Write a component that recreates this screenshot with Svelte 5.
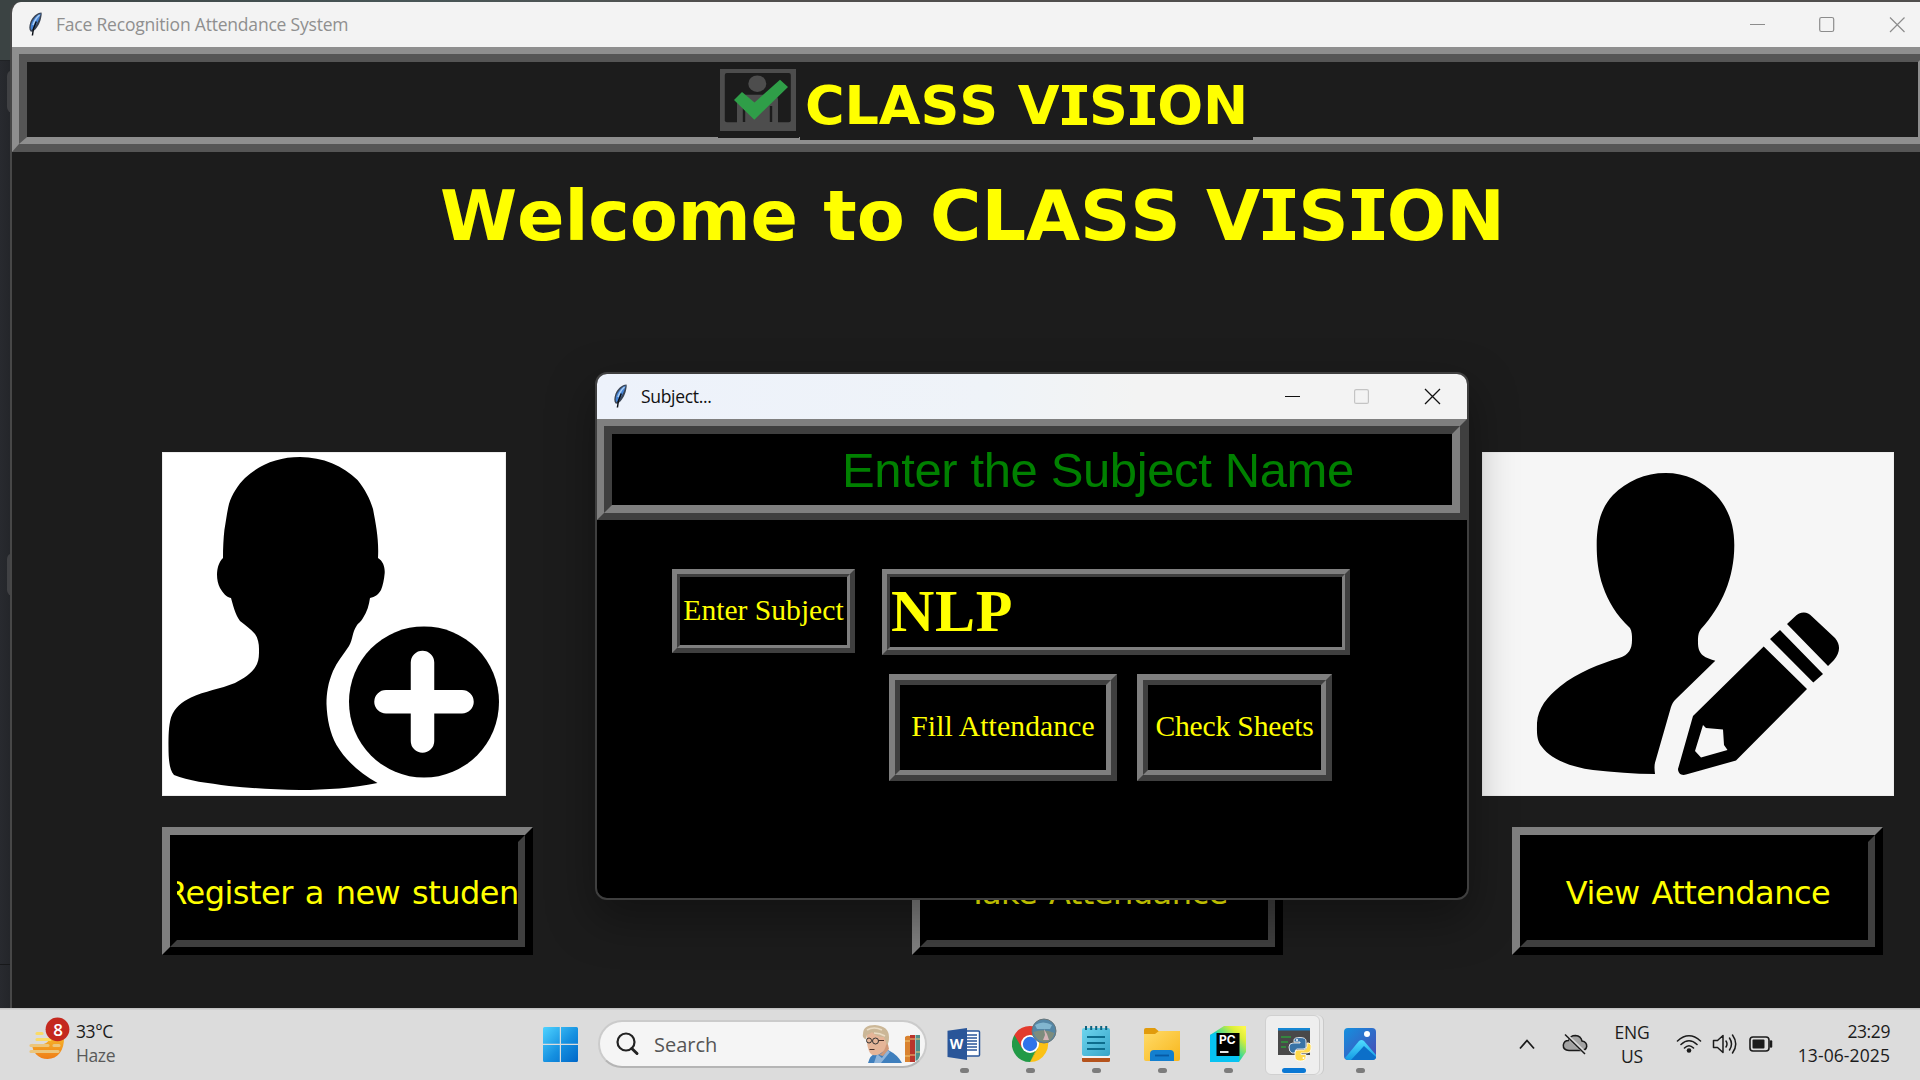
<script>
  const letters = (s) => s.split('');
  let subject = $state('NLP');
</script>

{#snippet feather()}
  <svg class="feather" viewBox="0 0 15 24">
    <path d="M13.5 0.6C9 .6 4.5 5 2.4 10C1 14 .8 17.5 2.6 19.6L4.6 19.8C9 17 12 11 13 6.500C13.600 4 14 2 13.500 .6Z" fill="#3a4454" />
    <path d="M12.800 1.600C9 3 5 7 3.400 11.500C2.600 14 2.400 16.500 3.200 18.200C7 15.500 11 9.500 12.800 1.600Z" fill="#4684d6" />
    <path d="M11.500 3C9 5 6.500 9 5 13" stroke="#a9cdf3" stroke-width="1.600" fill="none" />
    <path d="M8.300 9.500C6.500 13 4.600 17 4.400 23.500" stroke="#0b0f16" stroke-width="1.500" fill="none" />
  </svg>
{/snippet}

{#snippet banner(text)}{#each letters(text) as ch}{#if ch === 'I'}<span class="serif-i">I</span>{:else}{ch}{/if}{/each}{/snippet}

<div class="desktop">
  <div class="behind">
    <div class="behind-top"></div>
    <div class="behind-rest"></div>
    <i class="tab t1"></i><i class="tab t2"></i><i class="seam"></i>
  </div>

  <section class="main-window">
    <header class="titlebar">
      {@render feather()}
      <span class="title inactive">Face Recognition Attendance System</span>
      <svg class="ctl main-ctl" viewBox="0 0 160 20">
        <path d="M0 10.500H15" stroke="#8c8c8c" />
        <rect x="69.700" y="3.500" width="14" height="14" rx="1.800" fill="none" stroke="#8c8c8c" stroke-width="1.200" />
        <path d="M140 3.500L154.500 18M154.500 3.500L140 18" stroke="#8c8c8c" stroke-width="1.200" />
      </svg>
    </header>

    <div class="ridge head"><div class="ridge-in">
      <div class="logo-box">
        <svg width="76" height="62" viewBox="0 0 76 62">
          <rect width="76" height="62" fill="#4d4d4d" />
          <rect x="4.800" y="4" width="66" height="49.300" rx="2" fill="#1c1c1c" />
          <ellipse cx="37.300" cy="14.700" rx="9" ry="8.300" fill="#4d4d4d" />
          <path d="M17 54V31Q17 25.700 23 25.700H52Q58 25.700 58 31V54Z" fill="#4d4d4d" />
          <path d="M24 37V53M51 37V53" stroke="#1c1c1c" stroke-width="2.400" />
          <path d="M22 23L34.500 33.500L60 10.700L68 18L34.300 50.700L14 31Z" fill="#2f9e48" />
        </svg>
      </div>
      <div class="brand">{@render banner('CLASS VISION')}</div>
    </div></div>

    <h1>{@render banner('Welcome to CLASS VISION')}</h1>

    <div class="pictures">
      <svg class="pic one" viewBox="0 0 344 344" preserveAspectRatio="none">
        <path d="M138 5C161 5 181 14 195.500 28C203 37 208 47 211 57C214 73 217 88 216 106C221 109 223 115 222.700 121C222 128 221 133 219 138C216 143 213 145 208 146C207 153 205 160 201 166C199 170 196 171 194.500 174C190 181 191 187 187 194C181 203 175 210 171 219C166 231 164.500 241 164.500 252C165 267 168 281 174.500 293C184 309 199 322 215.500 331C190 336 165 338 138 338C112 338 90 336 67 334C46 331 26 329 12 323C7 318 6.500 305 6.500 295C6.500 284 6.500 275 9 265.500C13 255 20 250 29 245.500C43 239 58 237 73 231C82 226 91 221 95 212C97 207 97 203 97 197C97 192 96 186 93 182C89 177 83 173 78 169C73 162 71 153 69 146C64 145 61 141 58 136C56 132 55 128 55 122.600C55 116 57 110 61 106C61 96 61.500 86 62.400 78C64 69 65 60 67 52C70 42 76 33 83 26C98 12 117 5 138 5Z" />
        <ellipse cx="262" cy="250" rx="75" ry="75.600" />
        <path d="M260.500 210.500V289M224 249.700H300" stroke="#fff" stroke-width="23.500" stroke-linecap="round" />
      </svg>
      <svg class="pic two" viewBox="0 0 412 344" preserveAspectRatio="none">
        <path d="M183.700 21C203 21 221 29 234 43C247 57 252.300 74 252.300 93C252.300 126 240 154 219 177C216 181 216 185 216 190C216 196 217 200 221 203.500C224 206 229 207.500 233.300 208.700L194 247C191 250 190 252 189 255L173.500 309C172 313 172.500 318 173 322C152 322 131 320 111 318C87 315 68 306 60 295C54 288 55 279 55 271C56 256 65 245 78 234.500C96 220 118 212 137 206C147 203 150 197 150 188C150 183 150 180 148 176C134 163 126 149 121 134.600C116 120 114.700 107 114.700 93.300C114.700 74 118 57 131 43C145 29 163 21 183.700 21Z" />
        <path d="M305 172L312.500 165C318 159.500 325 159 330 164.500L353 186C359 193 358 201 352 208L346 214ZM298 178L341 222L331.300 230.500L288 187ZM281.700 194.500L325 237L254 308.500L204 322.600C199 324 196 321 196 317L211 264Z" />
        <path d="M221 273L224 276L241 277.500L242 293L245.500 298L219 305.500L213 299Z" fill="#f6f6f6" />
      </svg>
    </div>

    <div class="actions">
      {#each [['Register a new student', 'a'], ['Take Attendance', 'b'], ['View Attendance', 'c']] as [label, k]}
        <button class="raised {k}"><span class="raised-in"><span class="lbl">{label}</span></span></button>
      {/each}
    </div>
  </section>

  <section class="dialog">
    <header class="titlebar active">
      {@render feather()}
      <span class="title">Subject...</span>
      <svg class="ctl dlg-ctl" viewBox="0 0 160 20">
        <path d="M0 10.500H15" stroke="#111" />
        <rect x="69.600" y="3.600" width="13.800" height="13.800" rx="1.500" fill="none" stroke="#c4c4c4" stroke-width="1.200" />
        <path d="M140 3L155 18M155 3L140 18" stroke="#111" stroke-width="1.300" />
      </svg>
    </header>
    <div class="ridge dark dlg-head"><div class="ridge-in"><span>Enter the Subject Name</span></div></div>
    <div class="form">
      <div class="row">
        <div class="ridge dark thin tag"><div class="ridge-in">Enter Subject</div></div>
        <div class="ridge dark thin entry"><div class="ridge-in">{subject}</div></div>
      </div>
      <div class="row second">
        <div class="ridge dark mid fill"><div class="ridge-in">Fill Attendance</div></div>
        <div class="ridge dark mid check"><div class="ridge-in">Check Sheets</div></div>
      </div>
    </div>
  </section>

  <footer class="taskbar">
    <div class="weather">
      <svg width="44" height="46" viewBox="0 0 44 46">
        <defs><linearGradient id="sun" x1="0" y1="0" x2="0" y2="1"><stop offset="0" stop-color="#f6b62a" /><stop offset="1" stop-color="#ef7d17" /></linearGradient></defs>
        <path d="M4 27C4 37 11 43 19.500 43C30 43 36.500 34 36 21H22Q20 31 4 29Z" fill="url(#sun)" />
        <g stroke="#f4d272" stroke-width="3.200" stroke-linecap="round"><path d="M9 17.500H14M9 23.500H22" stroke="#fadb68" /><path d="M3 29.500H20M26 29.500H31M3 35.500H30" stroke="#ecc67c" /></g>
        <circle cx="29.500" cy="13.300" r="11.900" fill="#c4281e" />
      </svg>
      <b class="badge">8</b>
      <div class="temp"><span>33°C</span><span class="dim">Haze</span></div>
    </div>

    <svg class="start" viewBox="0 0 35 35">
      <defs><linearGradient id="win" x1="0" y1="0" x2="1" y2="1"><stop offset="0" stop-color="#4fd3ff" /><stop offset=".55" stop-color="#1590e0" /><stop offset="1" stop-color="#0067c8" /></linearGradient></defs>
      <path d="M1.500 0H16.800V16.800H0V1.500Q0 0 1.500 0ZM18 0H33.500Q35 0 35 1.500V16.800H18ZM0 18H16.800V35H1.500Q0 35 0 33.500ZM18 18H35V33.500Q35 35 33.500 35H18Z" fill="url(#win)" />
    </svg>

    <div class="search">
      <svg width="24" height="24" viewBox="0 0 24 24"><circle cx="10" cy="10" r="8.500" fill="none" stroke="#222" stroke-width="2.200" /><path d="M15.800 16.500L21 21.500" stroke="#222" stroke-width="3" stroke-linecap="round" /></svg>
      <span>Search</span>
      <svg class="art" width="60" height="40" viewBox="0 0 60 40">
        <path d="M6 38Q8 30 14 28L26 25Q36 30 40 38Z" fill="#3f7fbd" />
        <path d="M12 38L15 29L20 33L25 25L28 27L19 38Z" fill="#8fb4da" />
        <path d="M5 10Q6 3 15 3Q27 4 25 17Q24 26 17 29.500Q9 32 7 26Q4 18 5 10Z" fill="#e5b598" />
        <path d="M17 30Q24 26 25 15L27 24L21 31Z" fill="#cf9878" />
        <path d="M1 9Q1 0 13 0Q27 1 27 12Q27 18 25 20L22 12Q14 12 10 7Q7 10 5 10Q4 15 3 14Q0 12 1 9Z" fill="#cbb797" />
        <path d="M5 5Q12 1 20 5M12 8Q18 8 23 11" stroke="#eadcc5" stroke-width="1.600" fill="none" />
        <circle cx="7" cy="15.500" r="2.500" fill="none" stroke="#333" /><circle cx="13.500" cy="16" r="3" fill="none" stroke="#333" /><path d="M16.500 15.500H22M7.500 24.500H12.500" stroke="#4b332c" />
        <path d="M43 12Q45 10 48 11V37H43Z" fill="#d9822f" /><path d="M48 10H53V37H48Z" fill="#b9342b" /><path d="M53.500 10H58V30Q57 35 53.500 36Z" fill="#4e8f8b" />
        <path d="M43 16H48M43 31H48M48 14H53M48 30H53M54 14H58M54 27H58" stroke="#efcb79" />
      </svg>
    </div>

    <div class="apps">
      <div class="app">
        <svg viewBox="0 0 36 36"><rect x="19" y="5" width="14.500" height="25" rx="1" fill="#fff" stroke="#2a5699" stroke-width="1.500" /><path d="M21 9H31M21 12H31M21 15H31M21 18H31M21 21H31M21 24H31" stroke="#2a5699" stroke-width="1.300" /><path d="M1.500 4.800L21 2V34L1.500 31Z" fill="#2a5699" /></svg>
        <em class="w">W</em><i></i>
      </div>
      <div class="app">
        <svg class="wide" viewBox="0 0 46 46">
          <g transform="translate(18 28)">
            <path d="M0 0L15.600 -9A18 18 0 0 1 0 18Z" fill="#fbc116" />
            <path d="M0 0L0 18A18 18 0 0 1 -15.600 -9Z" fill="#229a47" />
            <path d="M-15.600 -9A18 18 0 0 1 15.600 -9H0L-7.800 4.500Z" fill="#e33b2e" />
            <path d="M0 18L7.800 4.500L0 0L-5 6Z" fill="#229a47" />
            <path d="M0 18L7.800 4.500L15.600 -9H0L6 6Z" fill="#fbc116" />
            <circle r="9" fill="#fff" /><circle r="7.200" fill="#2f73ea" />
          </g>
          <circle cx="32" cy="15" r="12" fill="#5486a5" stroke="#69777b" /><path d="M21.500 16Q32 12 42.500 17Q40 26 32 26Q24 25 21.500 16Z" fill="#7d8c7d" /><path d="M23 9Q31 4 40 9L38 13H25Z" fill="#82b6cf" /><path d="M32 13L35 18L37 24H31L33 19Z" fill="#d5b5b8" /></svg><i></i>
      </div>
      <div class="app">
        <svg viewBox="0 0 36 36"><defs><linearGradient id="np" x1="0" y1="0" x2="1" y2="1"><stop offset="0" stop-color="#6dd5ee" /><stop offset="1" stop-color="#38a5c8" /></linearGradient></defs><rect x="4" y="28" width="28" height="8" rx="1.500" fill="#b5531c" /><rect x="4" y="27" width="28" height="5" fill="#f3f3f3" /><rect x="4" y="2" width="28" height="28" rx="2" fill="url(#np)" /><path d="M8 0V4M13.200 0V4M18.200 0V4M23.200 0V4M28.200 0V4" stroke="#10627d" stroke-width="2" /><path d="M9 11H27M9 17H27M9 23H27" stroke="#0d6d8d" stroke-width="2" /></svg><i></i>
      </div>
      <div class="app">
        <svg viewBox="0 0 36 36"><defs><linearGradient id="fo" x1="0" y1="0" x2="1" y2="1"><stop offset="0" stop-color="#ffdb68" /><stop offset="1" stop-color="#f8b61c" /></linearGradient></defs><path d="M0 4Q0 2 2 2H11L15 5.500V12H0Z" fill="#e19b0c" /><path d="M0 8H11L15 5H36V33Q36 35 34 35H2Q0 35 0 33Z" fill="url(#fo)" /><path d="M6 35V28Q6 24 10 24H26Q30 24 30 28V35Z" fill="#137fcf" /><path d="M11 29.500H25" stroke="#0759a3" stroke-width="1.800" /></svg><i></i>
      </div>
      <div class="app">
        <svg viewBox="0 0 36 36"><defs><linearGradient id="pc" x1=".2" y1=".7" x2=".9" y2="0"><stop offset="0" stop-color="#07c3f2" /><stop offset=".3" stop-color="#20d5a6" /><stop offset=".75" stop-color="#d9ee37" /><stop offset="1" stop-color="#fcf84a" /></linearGradient></defs><path d="M14 0H36V26L29 36H0V9Z" fill="url(#pc)" /><path d="M0 9L7 6V29H29V36H0Z" fill="#07c3f2" /><rect x="6.500" y="7" width="23" height="23" /><path d="M10 26H18.500" stroke="#fff" stroke-width="1.800" /></svg>
        <em class="pc">PC</em><i></i>
      </div>
      <div class="app current">
        <svg viewBox="0 0 36 36"><rect x="2" y="2" width="32" height="27" fill="#494949" /><rect x="2" y="2" width="32" height="2.500" fill="#1686d2" /><path d="M5 11H15M5 16H12M5 21H10" stroke="#2f9b3c" stroke-width="1.300" /><path d="M24 11.500Q30 11.500 30 15V21Q30 23 27 23H21Q19 23 19 27H16Q13 26 13 21Q13 17 17 17H24V16H18V14Q18 11.500 24 11.500Z" fill="#3a73a6" stroke="#fff" stroke-width=".8" /><path d="M31 17H33Q36 18 35 23Q35 27 31 27H25V28.500H30V31Q30 35 24.500 35Q19 35 19 31V27Q19 24 22 24H28Q31 23 31 20Z" fill="#ffd94c" stroke="#fff" stroke-width=".8" /><circle cx="21" cy="14" r="1" fill="#fff" /><circle cx="27.500" cy="32" r="1" fill="#fff" /></svg><i></i>
      </div>
      <div class="app">
        <svg viewBox="0 0 36 36"><defs><linearGradient id="ph" x1="0" y1="0" x2="1" y2="1"><stop offset="0" stop-color="#1490df" /><stop offset="1" stop-color="#4b49b4" /></linearGradient><linearGradient id="ph2" x1="0" y1="0" x2="0" y2="1"><stop offset="0" stop-color="#4fdcff" /><stop offset="1" stop-color="#149be4" /></linearGradient></defs><rect x="2" y="2" width="32" height="32" rx="4" fill="url(#ph)" /><path d="M3 32L17 15Q19.500 13 22 15L34 29Q34 34 30 34H6Q4 34 3 32Z" fill="url(#ph2)" /><path d="M9 34L22 20L34 31Q34 34 30 34Z" fill="#0c6fc9" /><circle cx="25" cy="8" r="3" fill="#fff" /></svg><i></i>
      </div>
    </div>

    <div class="tray">
      <svg class="chev" viewBox="0 0 16 12"><path d="M1 10.500L8 2.500L15 10.500" fill="none" stroke="#1b1b1b" stroke-width="1.800" /></svg>
      <svg class="cloud" viewBox="0 0 26 22"><path d="M7 17.500Q1 17 1.300 12Q2 7.500 6.500 7.500Q8 2.500 13.500 2.500Q19 3 20 8Q25 9 24.700 13.500Q24 17.500 19 17.500Z" fill="#a3a3a3" stroke="#1b1b1b" stroke-width="1.500" /><path d="M3.500 1L23.500 20.500" stroke="#dcdcdc" stroke-width="3.200" /><path d="M3 1.500L23 21" stroke="#1b1b1b" stroke-width="1.500" /></svg>
      <div class="lang"><span>ENG</span><span>US</span></div>
      <svg class="wifi" viewBox="0 0 26 20"><g fill="none" stroke="#1b1b1b" stroke-width="1.600" stroke-linecap="round"><path d="M1.500 7Q13 -3.500 24.500 7M5 10.500Q13 3 21 10.500M8.500 14Q13 9.500 17.500 14" /></g><circle cx="13" cy="16.500" r="2.300" fill="#1b1b1b" /></svg>
      <svg class="spk" viewBox="0 0 26 22"><g fill="none" stroke="#1b1b1b" stroke-width="1.500" stroke-linecap="round" stroke-linejoin="round"><path d="M1.500 7.500H5.500L11 2.500V19.500L5.500 14.500H1.500Z" /><path d="M14 8Q16 11 14 14M17.500 5Q21.500 11 17.500 17M20.500 2Q27 11 20.500 20" /></g></svg>
      <svg class="bat" viewBox="0 0 24 18"><rect x="1" y="2" width="19" height="14" rx="3" fill="none" stroke="#1b1b1b" stroke-width="1.600" /><rect x="3.500" y="4.500" width="12" height="9" rx="1" fill="#1b1b1b" /><path d="M22 6.500V11.500" stroke="#1b1b1b" stroke-width="2.500" stroke-linecap="round" /></svg>
      <div class="clock"><span>23:29</span><span class="date">13-06-2025</span></div>
    </div>
  </footer>
</div>

<style>
  :global(body) { margin: 0; overflow: hidden; background: #1c1c1c; }
  * { box-sizing: border-box; }
  .desktop { position: relative; width: 1920px; height: 1080px; overflow: hidden; background: #504e4d; font-family: 'Open Sans', 'Noto Sans', sans-serif; display: flex; flex-direction: column; justify-content: flex-end; }

  .behind { position: absolute; left: 0; top: 0; width: 1920px; height: 1008px; display: flex; flex-direction: column; background: linear-gradient(90deg, #3c4444, #475556 400px, #4e5453 600px, #504e4d 700px); }
  .behind-top { width: 20px; height: 61px; background: #3b4343; border-bottom: 1px solid #202225; }
  .behind-rest { width: 12px; flex: 1; background: linear-gradient(90deg, #282a2f, #232529); }
  .tab { position: absolute; left: 7px; width: 8px; background: #404144; border-radius: 6px 0 0 6px; }
  .t1 { top: 70px; height: 43px; }
  .t2 { top: 553px; height: 43px; }
  .seam { position: absolute; left: 0; top: 964px; width: 10px; height: 1px; background: #17181a; }

  .main-window { position: absolute; left: 10px; top: 2px; width: 1924px; height: 1006px; border-left: 2px solid #474747; border-radius: 11px 0 0 0; background: #1c1c1c; overflow: hidden; }
  .titlebar { height: 45px; padding-bottom: 2px; background: #f3f3f3; display: flex; align-items: center; }
  .feather { width: 15px; height: 24px; margin-left: 16px; flex: none; }
  .title { font-size: 17.500px; line-height: 24px; margin-left: 13px; color: #111; white-space: nowrap; letter-spacing: -.32px; }
  .inactive { color: #8f8f8f; letter-spacing: -.2px; }
  .ctl { width: 160px; height: 20px; margin-left: auto; }
  .main-ctl { margin-right: 24px; }
  .dlg-ctl { margin-right: 22px; }

  .ridge { border: 7px solid; border-color: #8e8e8e #555 #555 #8e8e8e; }
  .ridge-in { border: 8px solid; border-color: #555 #8e8e8e #8e8e8e #555; height: 100%; display: flex; justify-content: flex-start; color: #ff0; white-space: nowrap; }
  .dark { border-color: #7f7f7f #3f3f3f #3f3f3f #7f7f7f; }
  .dark > .ridge-in { border-color: #3f3f3f #7f7f7f #7f7f7f #3f3f3f; }
  .head { height: 105px; border-bottom-width: 8px; width: 1921px; }
  .head > .ridge-in { border-bottom-width: 7px; padding-left: 691px; align-items: flex-start; }
  .logo-box { width: 81px; height: 76px; padding: 7px 2px; background: #1c1c1c; flex: none; }
  .logo-box svg { display: block; }
  .brand { width: 453px; height: 78px; margin-left: 1px; padding: 13px 0 0 5px; background: #1c1c1c; font: bold 54px/62px 'DejaVu Sans', sans-serif; font-kerning: none; letter-spacing: -.1px; word-spacing: 1px; flex: none; }
  h1 { margin: 24px 0 0 428px; height: 80px; font: bold 70px/80px 'DejaVu Sans', sans-serif; color: #ff0; font-kerning: none; letter-spacing: -.12px; word-spacing: 1.200px; white-space: nowrap; }
  .serif-i { display: inline-block; position: relative; width: .546em; text-align: center; }
  .serif-i::before, .serif-i::after { content: ''; position: absolute; left: .043em; width: .46em; height: .125em; background: #ff0; }
  .serif-i::before { top: .19em; }
  .serif-i::after { bottom: .226em; }

  .pictures { display: flex; justify-content: space-between; margin: 196px 38px 0 150px; width: 1732px; height: 344px; }
  .pic { height: 344px; background: #fff; outline: 1.500px solid #ededed; outline-offset: -1.500px; }
  .one { width: 344px; }
  .two { width: 412px; background: #f6f6f6; }
  .actions { display: grid; grid-template-columns: 750px 600px 371px; margin: 31px 0 0 150px; }
  .raised { width: 371px; height: 128px; padding: 0; background: #000; border: 8px solid; border-color: #7f7f7f #000 #000 #7f7f7f; color: #ff0; font: 32px/38px 'DejaVu Sans', sans-serif; letter-spacing: -.52px; word-spacing: 2.200px; }
  .raised-in { display: block; height: 112px; border: 7px solid; border-color: #000 #3f3f3f #3f3f3f #000; }
  .lbl { display: flex; justify-content: center; height: 97px; padding: 32px 0 0 1px; overflow: hidden; white-space: nowrap; }

  .dialog { position: absolute; left: 595px; top: 372px; width: 874px; height: 528px; border: 2px solid #3f3f3f; border-radius: 12px; background: #000; overflow: hidden; box-shadow: 0 18px 46px 2px rgba(0, 0, 0, .34); }
  .active { background: linear-gradient(90deg, #edf2fb, #eff3f8 45%, #f3f3f3 62%); }
  .dlg-head { width: 870px; height: 101px; }
  .dlg-head > .ridge-in { color: #008000; font: 49px/60px 'Liberation Sans', sans-serif; letter-spacing: -.38px; padding: 6px 0 0 230px; }
  .form { padding: 49px 0 0 75px; font: 29.600px/34px 'Liberation Serif', serif; }
  .row { display: flex; }
  .thin { border-width: 5px; }
  .thin > .ridge-in { border-width: 3px; }
  .mid { border-width: 6px; }
  .mid > .ridge-in { border-width: 5px; padding-bottom: 4px; }
  .tag { width: 183px; height: 84px; }
  .tag > .ridge-in, .mid > .ridge-in { align-items: center; justify-content: center; }
  .tag > .ridge-in { padding-bottom: 2px; }
  .entry { width: 468px; height: 86px; margin-left: 27px; }
  .entry > .ridge-in { font: bold 60px/68px 'Liberation Serif', serif; letter-spacing: .7px; padding-left: 1px; }
  .second { padding: 19px 0 0 217px; gap: 20px; }
  .fill { width: 228px; height: 107px; letter-spacing: .13px; }
  .check { width: 195px; height: 107px; letter-spacing: -.18px; }

  .taskbar { position: relative; height: 72px; background: linear-gradient(#c3c3c3, #c3c3c3 1px, #dcdcdc 2px); display: flex; color: #1b1b1b; font-size: 17.500px; line-height: 24px; }
  .weather { position: relative; display: flex; width: 543px; padding: 8px 0 0 28px; }
  .badge { position: absolute; left: 46px; top: 10px; width: 24px; text-align: center; font-size: 17px; font-weight: 600; line-height: 23px; color: #fff; }
  .temp { display: flex; flex-direction: column; margin: 3px 0 0 4px; letter-spacing: -.4px; }
  .dim { color: #595959; }
  .start { width: 35px; height: 35px; margin-top: 19px; }
  .search { display: flex; width: 329px; height: 48px; margin: 12px 0 0 20px; padding: 10px 0 0 16px; background: #f5f5f5; border: 2px solid #cbcbcb; border-bottom-color: #b5b5b5; border-radius: 24px; color: #555; font-size: 20px; line-height: 25px; }
  .search span { margin-left: 14px; }
  .art { margin: -7px 3px 0 auto; }
  .apps { display: flex; margin-left: 4px; }
  .app { position: relative; width: 66px; height: 72px; display: flex; flex-direction: column; align-items: center; }
  .app svg { width: 36px; height: 36px; margin-top: 18px; }
  .app svg.wide { width: 46px; height: 46px; margin: 8px -10px 0 0; }
  .app i { position: absolute; top: 60px; width: 9px; height: 5px; border-radius: 3px; background: #7c7c7c; }
  .app em { position: absolute; font-style: normal; font-weight: 700; color: #fff; }
  .w { left: 16px; top: 24px; width: 19px; text-align: center; font-size: 14px; }
  .pc { left: 24px; top: 20px; font: 700 12px/24px Inter, sans-serif; }
  .current::before { content: ''; position: absolute; z-index: 0; left: 4px; top: 7px; width: 53px; height: 58px; border: 1px solid #d0d0d0; border-radius: 6px; background: #eee; box-shadow: 3px 0 0 #e8e8e8, 4px 0 0 #cacaca; }
  .current svg { z-index: 1; }
  .current i { z-index: 1; width: 24px; background: #0a78d4; }

  .tray { display: flex; margin-left: 126px; }
  .chev { width: 16px; height: 12px; margin-top: 30px; }
  .cloud { width: 26px; height: 22px; margin: 25px 0 0 27px; }
  .lang { width: 60px; margin: 12px 0 0 14px; display: flex; flex-direction: column; align-items: center; letter-spacing: -.2px; }
  .wifi { width: 26px; height: 20px; margin: 26px 0 0 14px; }
  .spk { width: 26px; height: 22px; margin: 25px 0 0 10px; }
  .bat { width: 24px; height: 18px; margin: 27px 0 0 11px; }
  .clock { position: absolute; right: 30px; top: 11px; display: flex; flex-direction: column; align-items: flex-end; letter-spacing: -.4px; }
  .date { letter-spacing: .1px; }
</style>
